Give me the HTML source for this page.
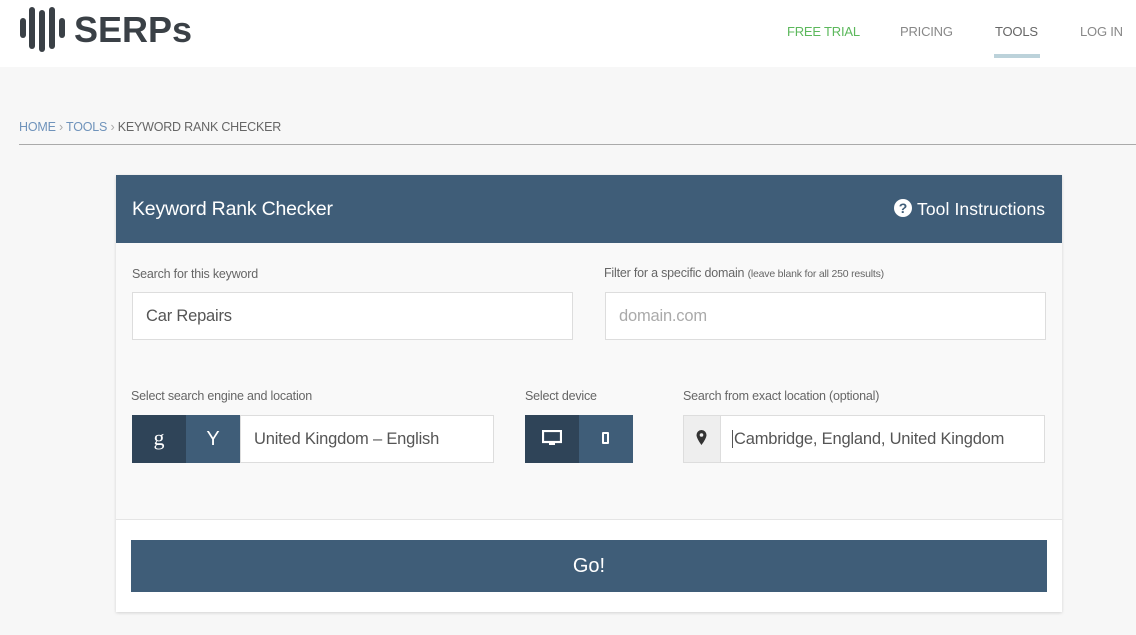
<!DOCTYPE html>
<html><head><meta charset="utf-8"><style>
*{box-sizing:border-box;margin:0;padding:0}
body{width:1136px;height:635px;overflow:hidden;background:#f7f7f7;font-family:"Liberation Sans",sans-serif;position:relative;color:#555}
.a{position:absolute}
.hdr{left:0;top:0;width:1136px;height:67px;background:#fff}
.nav{top:24px;font-size:13px;color:#888;letter-spacing:-0.2px}
.lbl{font-size:12.5px;color:#666;letter-spacing:-0.2px}
.inp{background:#fff;border:1px solid #ddd;height:48px;font-size:16.5px;padding-left:13px;line-height:46px;letter-spacing:-0.2px}
</style></head><body>
<div class="a hdr"></div>
<svg class="a" style="left:18px;top:6px" width="50" height="46" viewBox="0 0 50 46">
<g stroke="#3a4046" stroke-linecap="round" fill="none">
<line x1="5" y1="15" x2="5" y2="29" stroke-width="6"/>
<line x1="14" y1="4" x2="14" y2="40" stroke-width="6"/>
<line x1="24" y1="7" x2="24" y2="43" stroke-width="6"/>
<line x1="34" y1="4" x2="34" y2="40" stroke-width="6"/>
<line x1="44" y1="15" x2="44" y2="29" stroke-width="6"/>
</g></svg>
<div class="a" style="left:74px;top:9px;font-size:36px;font-weight:bold;color:#3a4046;letter-spacing:0px">SERPs</div>
<div class="a nav" style="left:787px;color:#5cb85c">FREE TRIAL</div>
<div class="a nav" style="left:900px">PRICING</div>
<div class="a nav" style="left:995px;color:#666">TOOLS</div>
<div class="a" style="left:994px;top:54px;width:46px;height:4px;background:#bcd2da"></div>
<div class="a nav" style="left:1080px">LOG IN</div>
<div class="a" style="left:19px;top:120px;font-size:12.5px;color:#666;letter-spacing:-0.2px"><span style="color:#6f93bb">HOME</span> <span style="color:#aaa">›</span> <span style="color:#6f93bb">TOOLS</span> <span style="color:#aaa">›</span> KEYWORD RANK CHECKER</div>
<div class="a" style="left:19px;top:144px;width:1117px;height:1px;background:#aaa"></div>
<div class="a" style="left:116px;top:175px;width:946px;height:437px;background:#f9f9f9;box-shadow:0 1px 3px rgba(0,0,0,.15)"></div>
<div class="a" style="left:116px;top:175px;width:946px;height:68px;background:#3f5d78"></div>
<div class="a" style="left:132px;top:198px;font-size:19.5px;color:#fff;letter-spacing:-0.2px">Keyword Rank Checker</div>
<div class="a" style="left:894px;top:199px;width:18px;height:18px;border-radius:50%;background:#fff;color:#3f5d78;font-size:14px;font-weight:bold;text-align:center;line-height:18px">?</div>
<div class="a" style="left:917px;top:199px;font-size:17.5px;color:#fff;letter-spacing:0.1px">Tool Instructions</div>
<div class="a lbl" style="left:132px;top:267px">Search for this keyword</div>
<div class="a lbl" style="left:604px;top:266px">Filter for a specific domain <span style="font-size:10.5px">(leave blank for all 250 results)</span></div>
<div class="a inp" style="left:132px;top:292px;width:441px;color:#555">Car Repairs</div>
<div class="a inp" style="left:605px;top:292px;width:441px;color:#aaa">domain.com</div>
<div class="a lbl" style="left:131px;top:389px">Select search engine and location</div>
<div class="a lbl" style="left:525px;top:389px">Select device</div>
<div class="a lbl" style="left:683px;top:389px">Search from exact location (optional)</div>
<div class="a" style="left:132px;top:415px;width:54px;height:48px;background:#2f4458;color:#fff;font-family:'Liberation Serif',serif;font-size:22px;text-align:center;line-height:46px">g</div>
<div class="a" style="left:186px;top:415px;width:54px;height:48px;background:#3f5d78;color:#fff;font-size:20px;text-align:center;line-height:48px">Y</div>
<div class="a inp" style="left:240px;top:415px;width:254px;color:#555">United Kingdom – English</div>
<div class="a" style="left:525px;top:415px;width:54px;height:48px;background:#2f4458"></div>
<svg class="a" style="left:542px;top:430px" width="20" height="17" viewBox="0 0 20 17"><rect x="1" y="1" width="18" height="11" fill="none" stroke="#fff" stroke-width="2.2"/><rect x="7" y="13" width="6" height="2" fill="#fff"/></svg>
<div class="a" style="left:579px;top:415px;width:54px;height:48px;background:#3f5d78"></div>
<div class="a" style="left:602px;top:432px;width:7px;height:12px;border:2px solid #fff;border-radius:1px"></div>
<div class="a" style="left:683px;top:415px;width:38px;height:48px;background:#eee;border:1px solid #ddd"></div>
<svg class="a" style="left:696px;top:430px" width="11" height="15" viewBox="0 0 11 15"><path d="M5.5 0A5 5 0 0 0 .5 5c0 3.5 5 10 5 10s5-6.5 5-10A5 5 0 0 0 5.5 0z" fill="#333"/><circle cx="5.5" cy="5" r="1.8" fill="#eee"/></svg>
<div class="a inp" style="left:720px;top:415px;width:325px;color:#555;padding-left:11px"><span style="border-left:1px solid #555;padding-left:1px">Cambridge, England, United Kingdom</span></div>
<div class="a" style="left:116px;top:519px;width:946px;height:93px;background:#fff;border-top:1px solid #e5e5e5"></div>
<div class="a" style="left:131px;top:540px;width:916px;height:52px;background:#3f5d78;color:#fff;font-size:20px;text-align:center;line-height:52px">Go!</div>
</body></html>
